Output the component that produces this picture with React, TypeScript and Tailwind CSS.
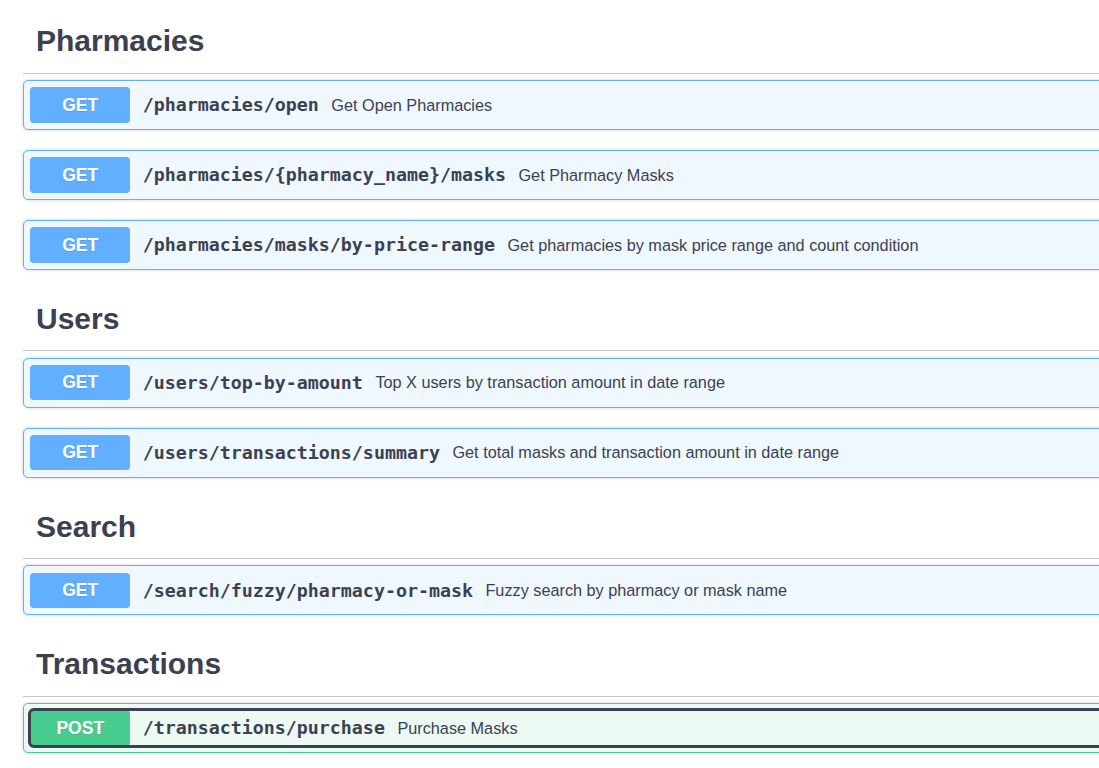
import React from "react";

type Op = {
  method: "GET" | "POST";
  path: string;
  summary: string;
  focused?: boolean;
};

type Section = {
  name: string;
  ops: Op[];
};

const sections: Section[] = [
  {
    name: "Pharmacies",
    ops: [
      { method: "GET", path: "/pharmacies/open", summary: "Get Open Pharmacies" },
      { method: "GET", path: "/pharmacies/{pharmacy_name}/masks", summary: "Get Pharmacy Masks" },
      {
        method: "GET",
        path: "/pharmacies/masks/by-price-range",
        summary: "Get pharmacies by mask price range and count condition",
      },
    ],
  },
  {
    name: "Users",
    ops: [
      { method: "GET", path: "/users/top-by-amount", summary: "Top X users by transaction amount in date range" },
      {
        method: "GET",
        path: "/users/transactions/summary",
        summary: "Get total masks and transaction amount in date range",
      },
    ],
  },
  {
    name: "Search",
    ops: [
      { method: "GET", path: "/search/fuzzy/pharmacy-or-mask", summary: "Fuzzy search by pharmacy or mask name" },
    ],
  },
  {
    name: "Transactions",
    ops: [{ method: "POST", path: "/transactions/purchase", summary: "Purchase Masks", focused: true }],
  },
];

function OpBlock({ op }: { op: Op }) {
  const isGet = op.method === "GET";

  return (
    <div
      className={
        isGet
          ? "mb-[20px] rounded-[5px] border border-[#61affe] bg-[#eff7ff] p-[6.25px] shadow-[0_0_3.75px_rgba(0,0,0,0.19)]"
          : "mb-[20px] rounded-[5px] border border-[#49cc90] bg-[#edfaf4] p-[6.25px] shadow-[0_0_3.75px_rgba(0,0,0,0.19)]"
      }
    >
      <div
        className={
          op.focused
            ? "flex items-center rounded-[4px] outline-3 outline-solid outline-offset-[-1px] outline-[#3b4151]"
            : "flex items-center"
        }
      >
        <span
          className={
            isGet
              ? "flex h-[35.5px] w-[100px] shrink-0 items-center justify-center rounded-[3.75px] bg-[#61affe] font-['Liberation_Sans',Arial,sans-serif] text-[17.5px] font-bold text-white [text-shadow:0_1px_0_rgba(0,0,0,0.1)]"
              : "flex h-[35.5px] w-[100px] shrink-0 items-center justify-center rounded-[3.75px] bg-[#49cc90] font-['Liberation_Sans',Arial,sans-serif] text-[17.5px] font-bold text-white [text-shadow:0_1px_0_rgba(0,0,0,0.1)]"
          }
        >
          {op.method}
        </span>
        <span className="px-[12.5px] font-['DejaVu_Sans_Mono',monospace] text-[18.3px] font-bold whitespace-nowrap text-[#3b4151]">
          {op.path}
        </span>
        <span className="font-['Liberation_Sans',Arial,sans-serif] text-[16.25px] whitespace-nowrap text-[#3b4151]">
          {op.summary}
        </span>
      </div>
    </div>
  );
}

export default function App() {
  return (
    <div className="h-[768px] w-[1099px] overflow-hidden bg-white">
      <div className="w-[1140px] pt-[12px] pl-[23px]">
        {sections.map((section) => (
          <section key={section.name}>
            <h3 className="mb-[6.25px] border-b border-[#c4c6cb] pt-[11px] pr-[25px] pb-[14.5px] pl-[13px] font-['Liberation_Sans',Arial,sans-serif] text-[30px] leading-[35px] font-bold text-[#3b4151]">
              {section.name}
            </h3>
            {section.ops.map((op) => (
              <OpBlock key={op.path} op={op} />
            ))}
          </section>
        ))}
      </div>
    </div>
  );
}
